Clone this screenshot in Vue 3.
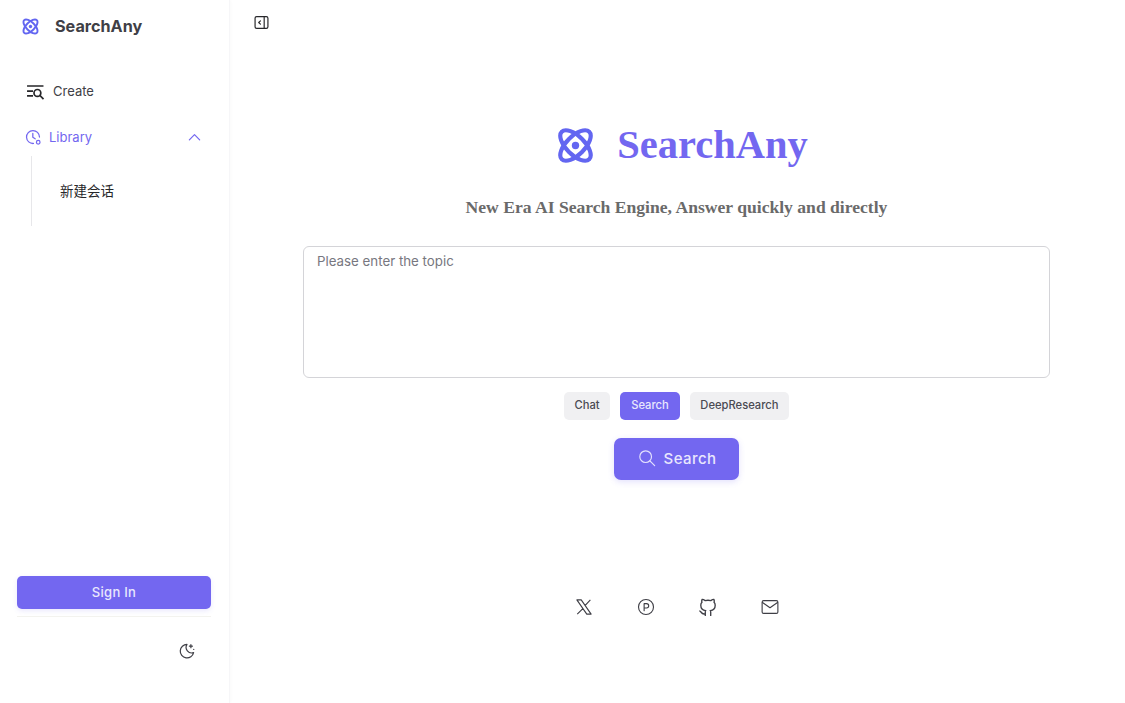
<script setup>
import { ref } from 'vue'

const modes = ['Chat', 'Search', 'DeepResearch']
const mode = ref('Search')
const topic = ref('')
</script>

<template>
  <div class="page">
    <aside class="sidebar">
      <div class="brand">
        <svg class="atom atom-small" viewBox="0 0 24 24" fill="none" stroke="#6366f1" stroke-width="2.7">
          <ellipse cx="12" cy="12" rx="12.6" ry="6" transform="rotate(45 12 12)" />
          <ellipse cx="12" cy="12" rx="12.6" ry="6" transform="rotate(-45 12 12)" />
          <circle cx="12" cy="12" r="2.4" fill="#6366f1" stroke="none" />
        </svg>
        <span class="brand-name">SearchAny</span>
      </div>

      <nav class="nav">
        <a class="nav-item create">
          <svg class="create-icon" viewBox="0 0 20 20" fill="none" stroke="#27272a" stroke-width="1.8" stroke-linecap="square">
            <path d="M2 4.200h15.500M2 9.500h4.500M2 14.500h4.500" />
            <circle cx="12" cy="11.500" r="3.600" />
            <path d="M14.800 14.300l3 3" />
          </svg>
          <span>Create</span>
        </a>
        <a class="nav-item library">
          <svg class="library-icon" viewBox="0 0 20 20" fill="none" stroke="#7367f0" stroke-width="1.4" stroke-linecap="round" stroke-linejoin="round">
            <path d="M10.500 17.200A7.200 7.200 0 1 1 17.200 10" />
            <path d="M9.800 6v4.200l2.600 1.800" />
            <circle cx="15.800" cy="15.800" r="2" />
          </svg>
          <span>Library</span>
          <svg class="chevron" viewBox="0 0 16 16" fill="none" stroke="#7367f0" stroke-width="1.3" stroke-linecap="round" stroke-linejoin="round">
            <path d="M2.500 10.500L8 5l5.500 5.500" />
          </svg>
        </a>
        <div class="sub-list">
          <a class="sub-item">新建会话</a>
        </div>
      </nav>

      <div class="sidebar-foot">
        <button class="sign-in">Sign In</button>
        <div class="foot-tools">
          <svg class="moon" viewBox="0 0 24 24" fill="none" stroke="#3f3f46" stroke-width="1.6" stroke-linecap="round" stroke-linejoin="round">
            <path d="M12 3.200a9 9 0 1 0 8.800 10.900 7.400 7.400 0 0 1-8.800-10.900z" />
            <path d="M17.200 3.500v4M15.200 5.500h4M21 9.800v.1" />
          </svg>
        </div>
      </div>
    </aside>

    <main class="main">
      <svg class="collapse" viewBox="0 0 14 14" fill="none" stroke="#27272a" stroke-width="1.1" stroke-linecap="round" stroke-linejoin="round">
        <rect x="1" y="1.500" width="12" height="11" rx="1.500" />
        <path d="M9.500 1.500v11M6 5.500L4.400 7 6 8.500" />
      </svg>

      <div class="hero">
        <div class="hero-title">
          <svg class="atom atom-large" viewBox="0 0 24 24" fill="none" stroke="#6366f1" stroke-width="2.7">
            <ellipse cx="12" cy="12" rx="12.6" ry="6" transform="rotate(45 12 12)" />
            <ellipse cx="12" cy="12" rx="12.6" ry="6" transform="rotate(-45 12 12)" />
            <circle cx="12" cy="12" r="2.4" fill="#6366f1" stroke="none" />
          </svg>
          <h1>SearchAny</h1>
        </div>
        <h2>New Era AI Search Engine, Answer quickly and directly</h2>

        <textarea v-model="topic" class="topic" placeholder="Please enter the topic"></textarea>

        <div class="modes">
          <button v-for="m in modes" :key="m" class="mode" :class="{ active: m === mode }" @click="mode = m">{{ m }}</button>
        </div>

        <button class="search-btn">
          <svg viewBox="0 0 20 20" fill="none" stroke="#e4e2fd" stroke-width="1.3" stroke-linecap="round">
            <circle cx="8.500" cy="8.500" r="6.500" />
            <path d="M13.200 13.200l5.300 5.300" />
          </svg>
          <span>Search</span>
        </button>
      </div>

      <div class="socials">
        <svg viewBox="0 0 24 24" fill="none" stroke="#3f3f46" stroke-width="1.5" stroke-linejoin="round">
          <path d="M2.500 2.500h5.800l13.200 19h-5.800zM10.800 13.800L3 21.500M20.500 2.500l-7.500 8" />
        </svg>
        <svg viewBox="0 0 24 24" fill="none" stroke="#3f3f46" stroke-width="1.5" stroke-linecap="round" stroke-linejoin="round">
          <circle cx="12" cy="12" r="10" />
          <path d="M9.500 17V7.500h3.200a2.900 2.900 0 0 1 0 5.800H9.500" />
        </svg>
        <svg viewBox="2 1.500 20 20" fill="none" stroke="#3f3f46" stroke-width="1.5" stroke-linecap="round" stroke-linejoin="round">
          <path d="M9 19c-4.300 1.400-4.300-2.500-6-3m12 5v-3.500c0-1 .1-1.400-.5-2 2.800-.3 5.500-1.400 5.500-6a4.600 4.600 0 0 0-1.300-3.200 4.200 4.200 0 0 0-.1-3.200s-1.100-.3-3.500 1.300a12.300 12.300 0 0 0-6.200 0C6.500 2.800 5.400 3.100 5.400 3.100a4.200 4.200 0 0 0-.1 3.200A4.600 4.600 0 0 0 4 9.500c0 4.600 2.700 5.700 5.500 6-.6.600-.6 1.200-.5 2V21" />
        </svg>
        <svg viewBox="0 0 24 24" fill="none" stroke="#3f3f46" stroke-width="1.5" stroke-linecap="round" stroke-linejoin="round">
          <rect x="1.500" y="3.500" width="21" height="17" rx="2" />
          <path d="M2 6l10 7 10-7" />
        </svg>
      </div>
    </main>
  </div>
</template>

<style scoped>
.page {
  display: flex;
  width: 1125px;
  height: 703px;
  overflow: hidden;
  background: #fff;
  font-family: Inter, "Noto Sans CJK SC", sans-serif;
  color: #27272a;
}

.sidebar {
  display: flex;
  flex-direction: column;
  flex: none;
  width: 229px;
  border-right: 1px solid #f6f6f8;
  box-shadow: 1px 0 3px rgba(0, 0, 0, 0.025);
}

.brand {
  display: flex;
  align-items: center;
  gap: 16px;
  height: 52px;
  padding-left: 22px;
}

.atom-small {
  width: 17px;
  height: 17px;
}

.brand-name {
  font-size: 16.200px;
  font-weight: 700;
  color: #3f3f46;
}

.nav {
  flex: 1;
  padding-top: 16px;
}

.nav-item {
  display: flex;
  align-items: center;
  height: 46px;
  font-size: 13px;
}

.create {
  gap: 8px;
  padding-left: 26px;
  color: #3f3f46;
}

.create-icon {
  width: 19px;
  height: 19px;
}

.library {
  gap: 7px;
  padding-left: 24px;
  color: #7367f0;
}

.library-icon {
  width: 18px;
  height: 18px;
}

.chevron {
  width: 15px;
  height: 15px;
  margin-left: auto;
  margin-right: 27px;
}

.sub-list {
  box-sizing: border-box;
  margin-top: -4px;
  margin-left: 31px;
  padding: 0 0 2px 28px;
  height: 70px;
  border-left: 1px solid #e7e7ea;
  display: flex;
  align-items: center;
}

.sub-item {
  font-size: 13.500px;
  color: #27272a;
}

.sidebar-foot {
  padding: 0 18px 0 17px;
}

.sign-in {
  display: block;
  width: 100%;
  height: 33px;
  padding: 0 0 2px;
  border: 0;
  border-radius: 5px;
  background: #7367f0;
  color: #e9e7fd;
  font-family: inherit;
  font-size: 13px;
  font-weight: 500;
  letter-spacing: 0.3px;
  box-shadow: 0 2px 5px rgba(115, 103, 240, 0.15);
}

.foot-tools {
  display: flex;
  justify-content: flex-end;
  height: 61px;
  margin-top: 7px;
  padding: 25px 15px 0 0;
  border-top: 1px solid #f3f3ef;
}

.moon {
  width: 18px;
  height: 18px;
}

.main {
  position: relative;
  flex: 1;
  display: flex;
  flex-direction: column;
  align-items: center;
  padding-right: 2px;
}

.collapse {
  position: absolute;
  top: 15px;
  left: 24px;
  width: 15px;
  height: 15px;
}

.hero {
  display: flex;
  flex-direction: column;
  align-items: center;
  padding-top: 120px;
}

.hero-title {
  display: flex;
  align-items: center;
  gap: 23px;
  height: 50px;
  margin-left: 12px;
}

.atom-large {
  width: 37px;
  height: 37px;
}

h1 {
  margin: 0 0 2px;
  font-family: "Liberation Serif", serif;
  font-size: 40.500px;
  font-weight: 700;
  color: #7367f0;
}

h2 {
  margin: 25px 0 0;
  font-family: "Liberation Serif", serif;
  font-size: 17.600px;
  font-weight: 700;
  line-height: 24px;
  color: #6a6a6a;
}

.topic {
  display: block;
  box-sizing: border-box;
  width: 747px;
  height: 132px;
  margin-top: 27px;
  padding: 5px 13px;
  border: 1px solid #d4d4d8;
  border-radius: 6px;
  outline: none;
  resize: none;
  font-family: inherit;
  font-size: 13.300px;
  line-height: 18px;
}

.topic::placeholder {
  color: #777780;
}

.modes {
  display: flex;
  gap: 10px;
  margin-top: 14px;
}

.mode {
  height: 28px;
  padding: 0 10.800px 2px;
  border: 0;
  border-radius: 5px;
  background: #f0f0f2;
  color: #4a4a52;
  font-family: inherit;
  font-size: 11.200px;
  font-weight: 500;
}

.mode.active {
  background: #7367f0;
  color: #e9e7fd;
}

.search-btn {
  display: flex;
  align-items: center;
  justify-content: center;
  gap: 8px;
  width: 125px;
  height: 42px;
  padding: 0 0 2px 1px;
  border: 0;
  border-radius: 7px;
  margin-top: 18px;
  background: #7367f0;
  color: #e9e7fd;
  font-family: inherit;
  font-size: 15px;
  font-weight: 500;
  letter-spacing: 0.4px;
  box-shadow: 0 2px 6px rgba(115, 103, 240, 0.2);
}

.search-btn svg {
  width: 18px;
  height: 18px;
}

.socials {
  display: flex;
  gap: 44px;
  margin-top: 118px;
}

.socials svg {
  width: 18px;
  height: 18px;
}
</style>
